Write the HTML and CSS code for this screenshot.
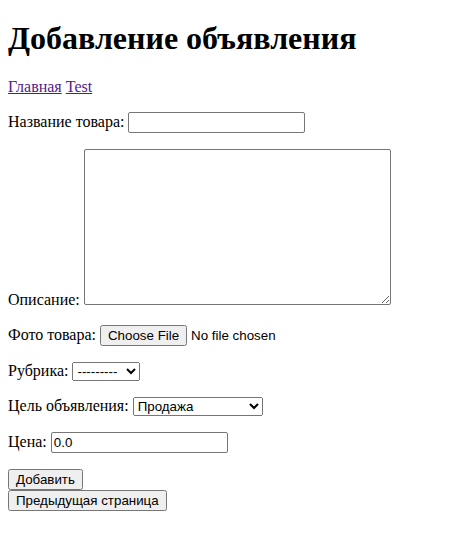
FILE: index.html
```html
<!DOCTYPE html>
<html lang="ru">
<head>
<meta charset="utf-8">
<title>Добавление объявления</title>
<link rel="stylesheet" href="styles.css">
</head>
<body class="page">
<h1 class="title">Добавление объявления</h1>
<p class="nav"><a href="#">Главная</a> <a href="#">Test</a></p>
<form class="ad-form">
<p><label for="id_title">Название товара:</label> <input type="text" id="id_title" class="field-text"></p>
<p><label for="id_content">Описание:</label> <textarea id="id_content" class="field-area" cols="40" rows="10"></textarea></p>
<p><label for="id_photo">Фото товара:</label> <input type="file" id="id_photo" class="field-file"></p>
<p><label for="id_rubric">Рубрика:</label> <select id="id_rubric" class="field-select rubric"><option>---------</option></select></p>
<p><label for="id_goal">Цель объявления:</label> <select id="id_goal" class="field-select goal"><option>Продажа</option><option>Покупка</option></select></p>
<p><label for="id_price">Цена:</label> <input type="text" id="id_price" class="field-text" value="0.0"></p>
<input type="submit" class="btn" value="Добавить">
</form>
<button type="button" class="btn">Предыдущая страница</button>
</body>
</html>
```
FILE: styles.css
```css
.page {
  margin: 8px;
  font-family: "Liberation Serif", "Times New Roman", serif;
  font-size: 16px;
  color: #000;
  background: #fff;
}
.title {
  font-size: 2em;
  margin: 12px 0 21px;
  font-weight: bold;
}
.nav a { color: #551a8b; }
.ad-form { margin: 0; }
.ad-form p { margin: 16px 0; }
.field-text,
.field-select,
.btn,
.field-file {
  font-family: "Liberation Sans", Arial, sans-serif;
  font-size: 13.333px;
}
.field-text {
  width: 177px;
  height: 21px;
  box-sizing: border-box;
  border: 1px solid #767676;
  border-radius: 2px;
  padding: 1px 2px;
}
.field-area {
  width: 307px;
  height: 156px;
  box-sizing: border-box;
  border: 1px solid #767676;
  border-radius: 2px;
  font-family: "Liberation Mono", monospace;
  font-size: 13.333px;
}
.rubric { width: 68px; }
.goal { width: 130px; }
```
